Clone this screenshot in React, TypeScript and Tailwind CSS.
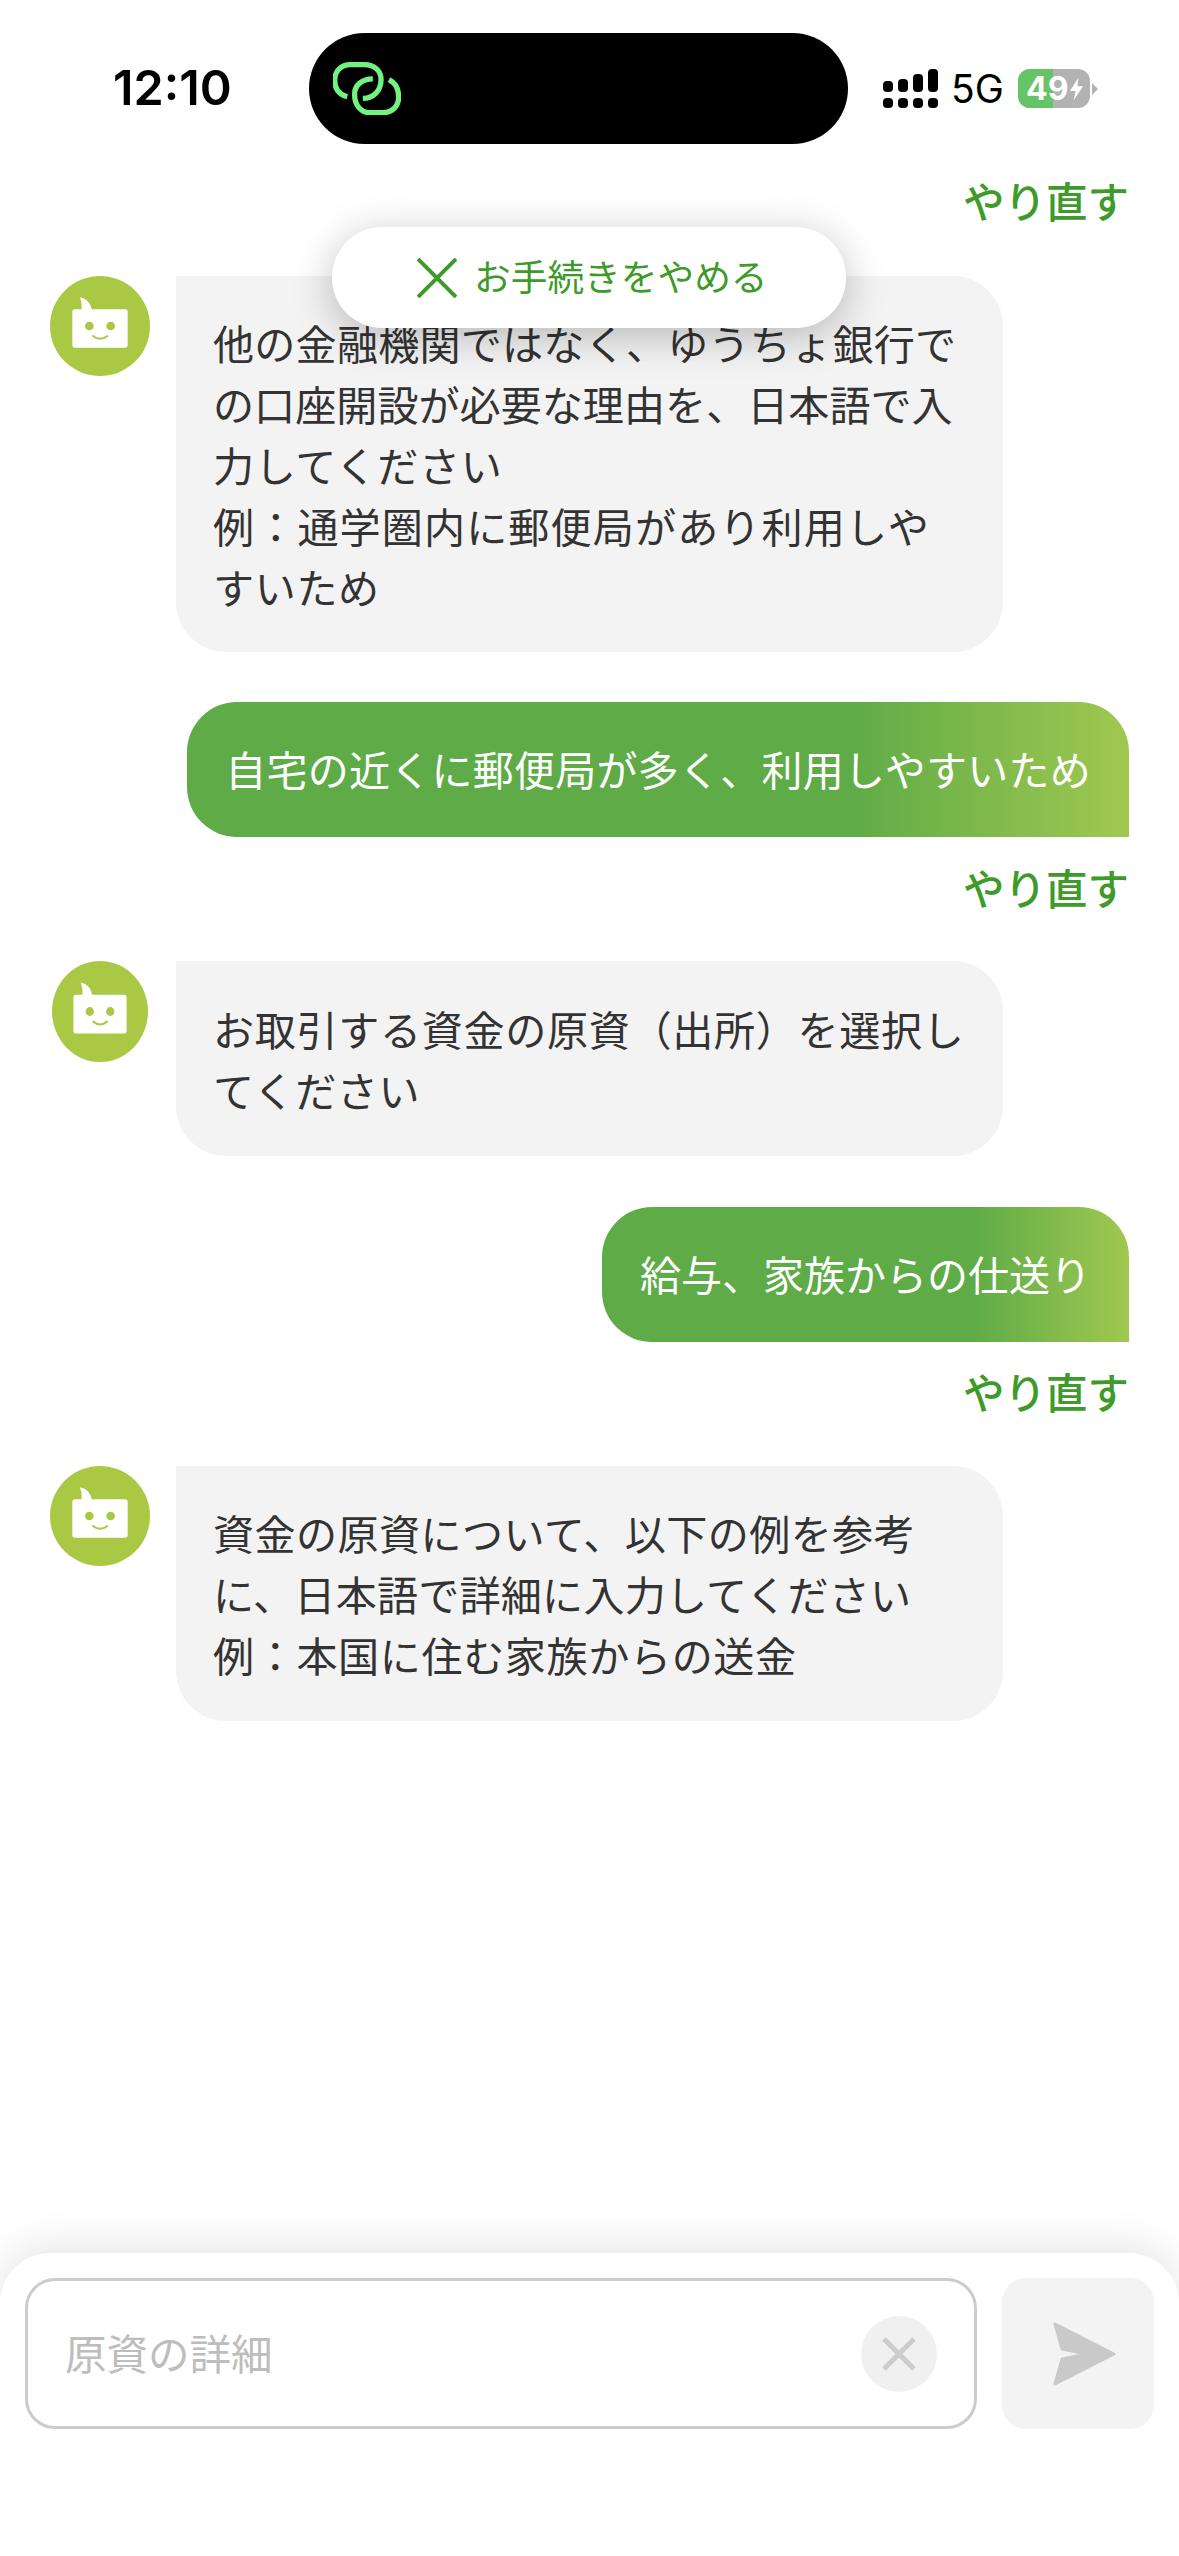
import React from "react";

const font = { fontFamily: '"Noto Sans CJK JP", "Noto Sans", sans-serif' };

function Avatar({ w, h }: { w: number; h: number }) {
  return (
    <svg viewBox="0 0 300 300" width={w} height={h} preserveAspectRatio="none" className="shrink-0">
      <ellipse cx="150" cy="150" rx="150" ry="150" fill="#a9c945" />
      <rect x="67" y="100" width="166" height="115" rx="8" fill="#fff" />
      <path d="M90 64 Q120 70 126 102 L95 102 Q97 82 90 64Z" fill="#fff" />
      <circle cx="118" cy="150" r="13" fill="#a9c945" />
      <circle cx="182" cy="150" r="13" fill="#a9c945" />
      <path d="M129 180 Q150 197 172 180" fill="none" stroke="#a9c945" strokeWidth="6" strokeLinecap="round" />
    </svg>
  );
}

function Bot({ lines, narrow, py }: { lines: [string, string][]; narrow?: boolean; py: string }) {
  return (
    <div className="flex items-start pl-[50px]">
      <div className={narrow ? "w-[126px] shrink-0 pl-[2px]" : "w-[126px] shrink-0"}>
        <Avatar w={narrow ? 96 : 100} h={narrow ? 101 : 100} />
      </div>
      <div className={`w-[827px] rounded-[50px] rounded-tl-none bg-[#f3f3f3] pl-[37px] text-[41.1px] leading-[61px] text-[#333333] whitespace-nowrap ${py}`}>
        {lines.map(([l, c]) => (
          <div key={l} className={c}>
            {l}
          </div>
        ))}
      </div>
    </div>
  );
}

function User({ text, mt }: { text: string; mt: string }) {
  return (
    <div className={`self-end mr-[50px] h-[135px] flex items-center px-[38px] pb-[2px] rounded-[50px] rounded-br-none bg-[linear-gradient(90deg,#5eab47_0%,#5eab47_70%,#a0c850_100%)] text-[41px] text-white whitespace-nowrap ${mt}`}>
      {text}
    </div>
  );
}

function Redo({ className }: { className: string }) {
  return (
    <div className={`self-end mr-[50px] h-[50px] flex items-center text-[41.5px] font-medium text-[#3e9a29] whitespace-nowrap ${className}`}>
      やり直す
    </div>
  );
}

export default function App() {
  return (
    <div className="relative flex flex-col h-[2556px] w-[1179px] overflow-hidden bg-white" style={font}>
      {/* status bar */}
      <div className="flex items-center h-[111px] mt-[33px] shrink-0">
        <div className="w-[309px] pl-[113px] text-[48.5px] font-semibold text-black" style={{ fontFamily: 'Inter, sans-serif' }}>
          12:10
        </div>
        <div className="w-[539px] h-[111px] rounded-[56px] bg-black flex items-center pl-[24px]">
          <svg viewBox="100 125 205 160" width="68" height="53">
            <path d="M143 230 C118 224 105 205 105 180 C105 152 125 133 152 133 L195 133 C225 133 245 152 245 178 C245 212 222 235 190 235" fill="none" stroke="#72f27e" strokeWidth="16" />
            <path d="M220 176 C188 176 165 195 165 222 C165 256 185 278 210 278 L250 278 C280 278 298 258 298 230 C298 205 288 188 269 178" fill="none" stroke="#72f27e" strokeWidth="16" />
          </svg>
        </div>
        <div className="flex items-center pl-[35px]">
          <svg width="55" height="40" viewBox="0 0 55 40" className="mr-[13px]">
            <g fill="#000">
              <rect x="0" y="12" width="10" height="11" rx="4" />
              <rect x="15" y="10" width="10" height="13" rx="4" />
              <rect x="30" y="5" width="10" height="18" rx="4" />
              <rect x="45" y="0" width="10" height="23" rx="4" />
              <rect x="0" y="29" width="10" height="10" rx="4" />
              <rect x="15" y="29" width="10" height="10" rx="4" />
              <rect x="30" y="29" width="10" height="10" rx="4" />
              <rect x="45" y="29" width="10" height="10" rx="4" />
            </g>
          </svg>
          <div className="w-[54px] text-[39px] leading-none text-black mr-[13px] whitespace-nowrap" style={{ fontFamily: 'Inter, sans-serif' }}>
            5G
          </div>
          <div className="flex items-center">
            <div className="relative w-[72px] h-[39px] rounded-[12px] overflow-hidden bg-[#b2b2b2] flex items-center">
              <div className="absolute left-0 top-0 h-full w-[35px] bg-[#65c466]" />
              <span className="relative pl-[8px] text-[32px] leading-none font-bold text-white" style={{ fontFamily: 'Inter, sans-serif' }}>
                49
              </span>
              <svg viewBox="0 0 16 26" width="15" height="26" className="relative ml-[1px]">
                <path d="M10 1 L1 15 H7 L5 25 L15 10 H9 Z" fill="#fff" />
              </svg>
            </div>
            <svg width="6" height="14" viewBox="0 0 6 14" className="ml-[2px]">
              <path d="M0 1 L6 7 L0 13Z" fill="#b2b2b2" />
            </svg>
          </div>
        </div>
      </div>

      {/* chat */}
      <div className="flex flex-col">
        <Redo className="mt-[31px] mb-[51px]" />
        <Bot
          py="py-[35.5px]"
          lines={[
            ["他の金融機関ではなく、ゆうちょ銀行で", "tracking-[0.2px]"],
            ["の口座開設が必要な理由を、日本語で入", ""],
            ["力してください", "tracking-[0.6px]"],
            ["例\uFF1A通学圏内に郵便局があり利用しや", "tracking-[1.1px]"],
            ["すいため", "tracking-[0.6px]"],
          ]}
        />
        <User mt="mt-[50px] tracking-[0.25px]" text="自宅の近くに郵便局が多く、利用しやすいため" />
        <Redo className="mt-[25px] mb-[49px]" />
        <Bot
          narrow
          py="py-[36.5px]"
          lines={[
            ["お取引する資金の原資\uFF08出所\uFF09を選択し", "tracking-[0.65px]"],
            ["てください", "tracking-[0.6px]"],
          ]}
        />
        <User mt="mt-[51px]" text="給与、家族からの仕送り" />
        <Redo className="mt-[24px] mb-[50px]" />
        <Bot
          py="py-[36px]"
          lines={[
            ["資金の原資について、以下の例を参考", "tracking-[0.4px]"],
            ["に、日本語で詳細に入力してください", "tracking-[0.2px]"],
            ["例\uFF1A本国に住む家族からの送金", "tracking-[0.6px]"],
          ]}
        />
      </div>

      {/* input sheet */}
      <div className="mt-auto h-[303px] shrink-0 rounded-t-[50px] bg-white shadow-[0_-8px_40px_rgba(0,0,0,0.1)] pt-[25px] px-[25px] flex gap-[25px] items-start z-10">
        <div className="w-[953px] h-[151px] rounded-[30px] border-[3px] border-[#cccccc] flex items-center justify-between pl-[37px] pr-[37px]">
          <span className="text-[41.5px] text-[#bdbdbd] pb-[3px]">原資の詳細</span>
          <div className="w-[76px] h-[76px] rounded-full bg-[#f0f0f0] flex items-center justify-center">
            <svg width="34" height="34" viewBox="0 0 34 34">
              <path d="M2 2 L32 32 M32 2 L2 32" stroke="#cccccc" strokeWidth="5" />
            </svg>
          </div>
        </div>
        <div className="w-[152px] h-[151px] rounded-[24px] bg-[#f3f3f3] flex items-center pl-[51px]">
          <svg width="64" height="64" viewBox="0 0 64 64">
            <path d="M2 2 L61 32 L2 62 L9 37 L34 32 L9 27 Z" fill="#c9c9c9" stroke="#c9c9c9" strokeWidth="3" strokeLinejoin="round" />
          </svg>
        </div>
      </div>

      {/* floating pill */}
      <div className="absolute left-[332px] top-[227px] w-[514px] h-[101px] rounded-[50px] bg-white shadow-[0_8px_40px_rgba(0,0,0,0.25)] flex items-center pl-[85px] z-20">
        <svg width="40" height="40" viewBox="0 0 40 40" className="mr-[17px] shrink-0">
          <path d="M1 1 L39 39 M39 1 L1 39" stroke="#3e9a29" strokeWidth="4" />
        </svg>
        <span className="text-[36.7px] text-[#3e9a29] whitespace-nowrap pb-[3px]">お手続きをやめる</span>
      </div>
    </div>
  );
}
